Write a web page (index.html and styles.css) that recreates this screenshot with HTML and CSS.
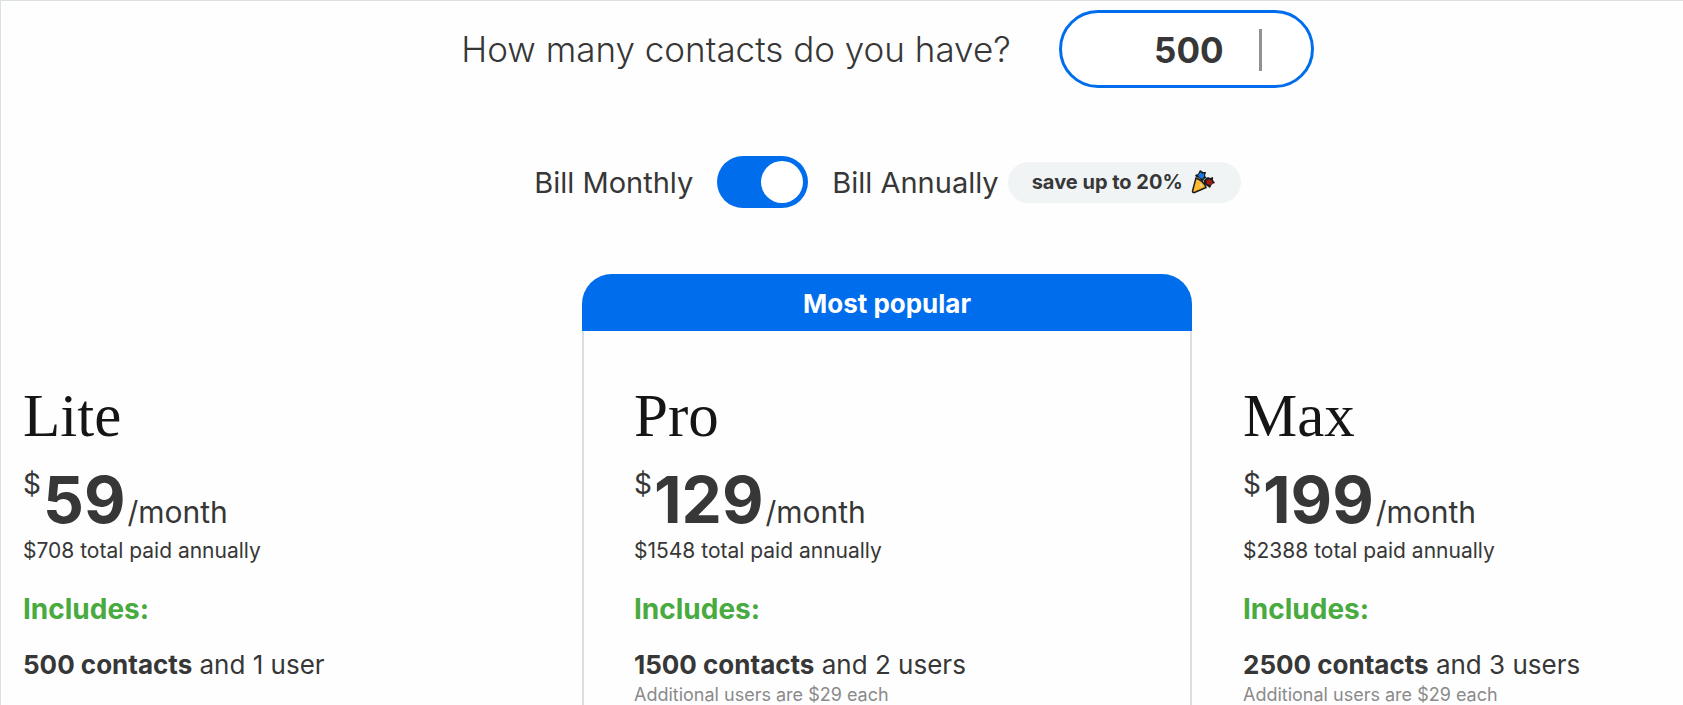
FILE: index.html
```html
<!DOCTYPE html>
<html lang="en">
<head>
    <meta charset="UTF-8">
    <meta name="viewport" content="width=device-width, initial-scale=1.0">
    <title>Pricing</title>
    <link rel="stylesheet" href="styles.css">
</head>
<body>

    <div class="contacts-row">
        <label class="question" for="contacts">How many contacts do you have?</label>
        <div class="contacts-field">
            <input class="contacts-input" id="contacts" name="contacts" type="text" value="500">
            <span class="caret"></span>
        </div>
    </div>

    <div class="billing-row">
        <label class="bill-label" for="billing">Bill Monthly</label>
        <input class="switch" id="billing" name="billing" type="checkbox" checked>
        <div class="annual">
            <label class="bill-label" for="billing">Bill Annually</label>
            <span class="badge">
                save up to 20%
                <svg class="party" viewBox="0 0 24 24" aria-hidden="true">
                    <path d="M4 5l3-1 2-4 3 2 3 0-1 4 2 2-3 1-1 3-4-4-3-1z" fill="#1b1b1f"/>
                    <path d="M13 10l4-3 2 1 3-1 0 3 2 3-3 1-2 4-3-2-3-2z" fill="#1b1b1f"/>
                    <path d="M5 8L1.500 21q0 2 2 1.500L15 17.500Q13 11 5 8z" fill="#fdbb2d" stroke="#1b1b1f" stroke-width="1.500"/>
                    <path d="M7 5l3-3 1 2 2-1 0 4-2 2-3-2z" fill="#1a78e0"/>
                    <path d="M15 11l3-2 1 1 2 0 0 2 1 2-3 1-3-1z" fill="#a01c12"/>
                    <path d="M9 13l2 2 0 2-2-1z" fill="#d9d2c5"/>
                </svg>
            </span>
        </div>
    </div>

    <div class="plans">
        <div class="plan">
            <h2>Lite</h2>
            <p class="price"><span class="currency">$</span><strong>59</strong><span class="period">/month</span></p>
            <p class="total">$708 total paid annually</p>
            <h3>Includes:</h3>
            <p class="contacts"><b>500 contacts</b> and 1 user</p>
        </div>

        <div class="plan popular">
            <div class="popular-header">Most popular</div>
            <h2>Pro</h2>
            <p class="price"><span class="currency">$</span><strong>129</strong><span class="period">/month</span></p>
            <p class="total">$1548 total paid annually</p>
            <h3>Includes:</h3>
            <p class="contacts"><b>1500 contacts</b> and 2 users</p>
            <p class="additional">Additional users are $29 each</p>
        </div>

        <div class="plan">
            <h2>Max</h2>
            <p class="price"><span class="currency">$</span><strong>199</strong><span class="period">/month</span></p>
            <p class="total">$2388 total paid annually</p>
            <h3>Includes:</h3>
            <p class="contacts"><b>2500 contacts</b> and 3 users</p>
            <p class="additional">Additional users are $29 each</p>
        </div>
    </div>

</body>
</html>
```

FILE: styles.css
```css
* {
    box-sizing: border-box;
}

body {
    display: flex;
    flex-direction: column;
    min-height: 100vh;
    margin: 0;
    border-top: 1px solid #d9dfe2;
    border-left: 1px solid #d9dfe2;
    background-color: #fefefe;
    color: #373737;
    font-family: Inter, "Liberation Sans", sans-serif;
}

h2, h3, p {
    margin: 0;
}

.contacts-row,
.billing-row {
    display: flex;
    justify-content: center;
    align-items: center;
    padding-left: 91px;
}

.contacts-row {
    gap: 48px;
    margin-top: 9px;
}

.question {
    font-size: 35px;
    font-weight: 300;
}

.contacts-field {
    position: relative;
}

.contacts-input {
    display: block;
    width: 255px;
    height: 78px;
    padding: 2px 87px 0 20px;
    border: 3px solid #006ded;
    border-radius: 39px;
    background-color: #fff;
    color: #373737;
    font-family: inherit;
    font-size: 35px;
    font-weight: 700;
    text-align: right;
    outline: none;
}

.caret {
    position: absolute;
    top: 19px;
    right: 52px;
    width: 3px;
    height: 42px;
    background-color: #919191;
}

.billing-row {
    gap: 24px;
    margin-top: 68px;
}

.bill-label {
    font-size: 29px;
}

.switch {
    appearance: none;
    display: flex;
    justify-content: flex-end;
    align-items: center;
    width: 91px;
    height: 52px;
    margin: 0;
    padding: 5px;
    border-radius: 26px;
    background-color: #006ded;
    cursor: pointer;
}

.switch::before {
    content: "";
    width: 42px;
    height: 42px;
    border-radius: 50%;
    background-color: #fff;
}

.switch:not(:checked) {
    justify-content: flex-start;
}

.annual {
    display: flex;
    align-items: center;
    gap: 9px;
}

.badge {
    display: flex;
    align-items: center;
    gap: 8px;
    height: 41px;
    padding: 0 26px 0 24px;
    border-radius: 21px;
    background-color: #f0f4f5;
    font-size: 20px;
    font-weight: 700;
}

.party {
    width: 24px;
    height: 24px;
}

.plans {
    display: grid;
    flex: 1;
    grid-template-columns: 581fr 610fr 491fr;
    margin-top: 66px;
}

.plan {
    padding: 108px 22px 0;
}

.plan:last-child {
    padding-left: 51px;
}

.popular {
    padding: 0 50px;
    border: 2px solid #d9dfe2;
    border-width: 0 2px;
    border-radius: 30px 30px 0 0;
}

.popular-header {
    height: 57px;
    margin: 0 -52px 51px;
    border-radius: 30px 30px 0 0;
    background-color: #006ded;
    color: #fff;
    font-size: 26px;
    font-weight: 700;
    line-height: 60px;
    text-align: center;
}

h2 {
    color: #151515;
    font-family: "Liberation Serif", serif;
    font-size: 61px;
    font-weight: 400;
    line-height: 68px;
}

.price {
    display: flex;
    align-items: baseline;
    height: 83px;
    line-height: 100px;
}

.price strong {
    margin: 0 2px;
    font-size: 64px;
}

.currency {
    align-self: flex-start;
    font-size: 28px;
    line-height: 68px;
}

.period {
    font-size: 30px;
}

.total {
    font-size: 21px;
    line-height: 36px;
}

h3 {
    margin-top: 22px;
    color: #48aa3f;
    font-size: 28px;
    line-height: 36px;
}

.contacts {
    margin-top: 20px;
    font-size: 26px;
    line-height: 36px;
}

.additional {
    margin-top: 2px;
    color: #8a8a8a;
    font-size: 18px;
    line-height: 20px;
}
```
